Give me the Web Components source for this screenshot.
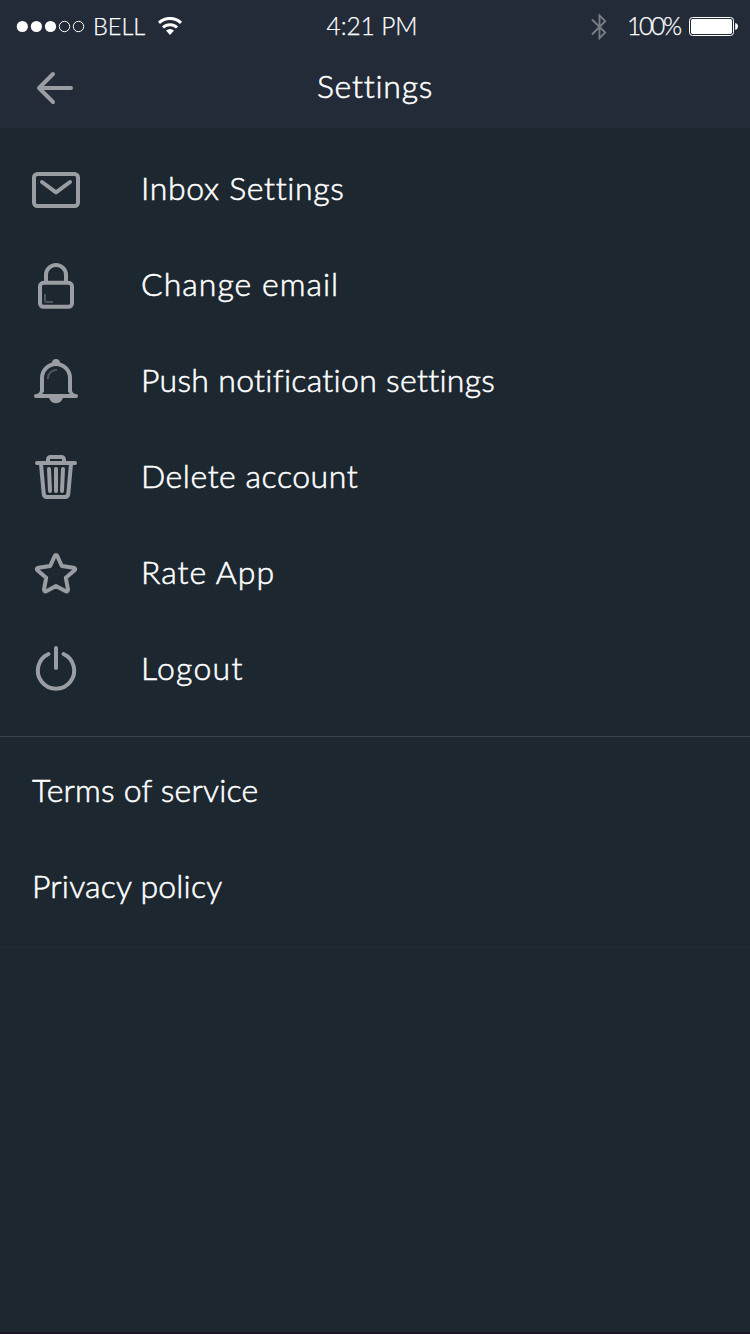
<!DOCTYPE html>
<html lang="en">
<head>
<meta charset="utf-8">
<title>Settings</title>
<style>
  html, body { margin: 0; height: 100%; background: #1d2730; }
  body { font-family: Lato, "Open Sans", sans-serif; font-weight: 300; color: #fff; overflow: hidden; font-variant-ligatures: none; }
</style>
</head>
<body>
<settings-screen></settings-screen>
<script>
const define = (name, html, setup) => {
  const template = document.createElement('template');
  template.innerHTML = html;
  customElements.define(name, class extends HTMLElement {
    connectedCallback() {
      if (this.shadowRoot) return;
      this.attachShadow({ mode: 'open' }).append(template.content.cloneNode(true));
      if (setup) setup(this);
    }
  });
};

const GLYPHS = {
  mail: '<rect x="2" y="8" width="44" height="32" rx="3.5"/><path d="M10 16l14 10.3L38 16"/>',
  lock: '<rect x="8" y="20.8" width="32" height="24" rx="3.5"/><path d="M14 20V13a10 10 0 0 1 20 0v7"/><path d="M13 32v6.500a1.500 1.500 0 0 0 1.500 1.500H21" stroke-width="2" opacity=".4" stroke-linecap="butt"/>',
  bell: '<path d="M10 33V20a14 14 0 0 1 28 0v13"/><path d="M8 32q0 3-3.5 4L3.500 38H44.500L43.500 36Q40 35 40 32L37 36H11Z" fill="currentColor" stroke="none"/><path d="M4 38H44"/><path d="M17 39h14a7 6.200 0 0 1-14 0ZM20 5a4 4 0 0 1 8 0Z" fill="currentColor" stroke="none"/><path d="M16 21v-1a8 8 0 0 1 8-8h1" stroke-width="2" opacity=".4" stroke-linecap="butt"/>',
  trash: '<path d="M5 9H43M16 8V5.500A2.500 2.500 0 0 1 18.500 3H29.500A2.500 2.500 0 0 1 32 5.500V8M9 10L11.700 39.500Q12 43 15 43H33Q36 43 36.300 39.500L39 10M17 15L18 37M24 15V37M31 15L30 37"/>',
  star: '<path d="M22.600 6.200Q24 3.800 25.400 6.200L29.800 16L41.500 17.700Q44.500 18.500 42.300 20.500L33.800 27.800L36 39.300Q36 42.300 33.300 41L24 36L14.700 41Q12 42.300 12 39.300L14.200 27.800L5.700 20.500Q3.500 18.500 6.500 17.700L18.200 16Z"/>',
  power: '<path d="M24 2V22M16.500 8A18.200 18.200 0 1 0 31.500 8"/>',
  back: '<path d="M40 24H8.500M22 10L8 24L22 38"/>'
};

define('line-icon', `
  <style>
    :host { display: block; width: 48px; height: 48px; flex: none; color: #9a9ea3; }
    svg { display: block; width: 100%; height: 100%; fill: none; stroke: currentColor; stroke-width: 4; stroke-linecap: round; stroke-linejoin: round; }
  </style>
  <svg viewBox="0 0 48 48"></svg>`,
  el => { el.shadowRoot.querySelector('svg').innerHTML = GLYPHS[el.getAttribute('name')]; });

define('signal-strength', `
  <style>:host { display: block; } svg { display: block; }</style>
  <svg width="70" height="14" viewBox="0 0 70 14">
    <g fill="#fff"><circle cx="6.300" cy="6.500" r="5.600"/><circle cx="20.400" cy="6.500" r="5.600"/><circle cx="34.500" cy="6.500" r="5.600"/></g>
    <g fill="none" stroke="#fff"><circle cx="48.500" cy="6.500" r="5.200"/><circle cx="62.500" cy="6.500" r="5.200"/></g>
  </svg>`);

define('wifi-glyph', `
  <style>:host { display: block; } svg { display: block; }</style>
  <svg width="26" height="20" viewBox="0 0 26 20">
    <g fill="none" stroke="#fff" stroke-width="3">
      <path d="M2 5.800A16 16 0 0 1 24 5.800M6 10.500A10.200 10.200 0 0 1 20 10.500"/>
    </g>
    <path d="M9 13.500Q13 10.300 17 13.500L13 18Z" fill="#fff"/>
  </svg>`);

define('bluetooth-glyph', `
  <style>:host { display: block; } svg { display: block; }</style>
  <svg width="18" height="28" viewBox="0 0 18 28" fill="none" stroke="#777d85" stroke-width="1.900">
    <path d="M2 6.500L15.200 19.500L9.500 25.300V2.500L15.200 8.200L2 21.500"/>
  </svg>`);

define('battery-glyph', `
  <style>:host { display: block; } svg { display: block; }</style>
  <svg width="50" height="20" viewBox="0 0 50 20">
    <rect x=".500" y=".500" width="44" height="18" rx="3" fill="none" stroke="#fff"/>
    <rect x="2" y="2" width="41" height="15" rx="1.700" fill="#fff"/>
    <path d="M46.200 6Q49 6.800 49 9.500T46.200 13Z" fill="#fff"/>
  </svg>`);

define('status-bar', `
  <style>
    :host { display: grid; grid-template-columns: 1fr auto 1fr; align-items: center; height: 53px; padding: 0 11px 0 16px; box-sizing: border-box; font-size: 24.500px; line-height: 28px; white-space: nowrap; -webkit-text-stroke: .25px #fff; }
    div { display: flex; align-items: center; }
    span { padding-bottom: 1px; }
    .carrier { margin-left: 7px; font-size: 23.500px; }
    wifi-glyph { margin-left: 12px; }
    .time { margin-right: 11px; letter-spacing: -.1px; }
    .right { justify-content: flex-end; }
    .pct { margin: 0 9px 0 19px; letter-spacing: -2.200px; }
  </style>
  <div><signal-strength></signal-strength><span class="carrier">BELL</span><wifi-glyph></wifi-glyph></div>
  <div class="time"><span>4:21 PM</span></div>
  <div class="right"><bluetooth-glyph></bluetooth-glyph><span class="pct">100%</span><battery-glyph></battery-glyph></div>`);

define('nav-header', `
  <style>
    :host { display: grid; grid-template-columns: 48px 1fr 48px; align-items: center; height: 75px; padding: 0 31px; box-sizing: border-box; }
    line-icon { margin-top: -5px; }
    h1 { margin: 0; padding-bottom: 10px; font: inherit; font-size: 32px; line-height: 40px; text-align: center; letter-spacing: .750px; -webkit-text-stroke: .55px #fff; }
  </style>
  <line-icon name="back"></line-icon>
  <h1><slot></slot></h1>`);

define('menu-item', `
  <style>
    :host { display: flex; align-items: center; height: 96px; padding: 0 32px; box-sizing: border-box; }
    line-icon { margin-right: 61px; }
    span { font-size: 32px; line-height: 40px; white-space: nowrap; padding-bottom: 5px; -webkit-text-stroke: .55px #fff; }
  </style>
  <span><slot></slot></span>`,
  el => {
    const label = el.shadowRoot.querySelector('span');
    label.style.letterSpacing = el.getAttribute('track') + 'px';
    const name = el.getAttribute('icon');
    if (name) {
      const icon = document.createElement('line-icon');
      icon.setAttribute('name', name);
      label.before(icon);
    }
  });

define('menu-section', `
  <style>:host { display: block; }</style>
  <slot></slot>`);

define('settings-screen', `
  <style>
    :host { display: flex; flex-direction: column; width: 750px; height: 1334px; box-sizing: border-box; background: #1d2730; border-bottom: 2px solid #1f152b; }
    header { background: #222b37; }
    .main { padding: 14px 0 18px; border-bottom: 1px solid #3a434b; }
    .legal { padding: 7px 0 8px; border-bottom: 1px solid #1a232b; }
  </style>
  <header>
    <status-bar></status-bar>
    <nav-header>Settings</nav-header>
  </header>
  <menu-section class="main">
    <menu-item icon="mail" track=".66">Inbox Settings</menu-item>
    <menu-item icon="lock" track="1.02">Change email</menu-item>
    <menu-item icon="bell" track=".3">Push notification settings</menu-item>
    <menu-item icon="trash" track=".54">Delete account</menu-item>
    <menu-item icon="star" track="1.02">Rate App</menu-item>
    <menu-item icon="power" track="1.3">Logout</menu-item>
  </menu-section>
  <menu-section class="legal">
    <menu-item track=".18">Terms of service</menu-item>
    <menu-item track=".2">Privacy policy</menu-item>
  </menu-section>`);
</script>
</body>
</html>
